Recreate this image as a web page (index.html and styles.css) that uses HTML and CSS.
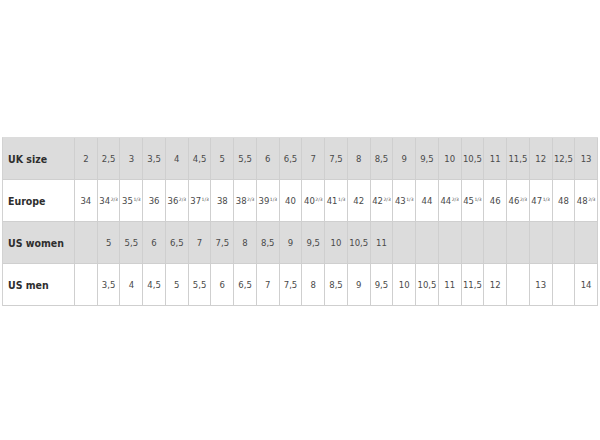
FILE: index.html
```html
<!DOCTYPE html>
<html>
<head>
<meta charset="utf-8">
<link rel="stylesheet" href="styles.css">
</head>
<body>
<div class="page">
  <div class="table">
    <div class="row gray">
      <div class="cell label">UK size</div>
      <div class="cell">2</div><div class="cell">2,5</div><div class="cell">3</div><div class="cell">3,5</div><div class="cell">4</div><div class="cell">4,5</div><div class="cell">5</div><div class="cell">5,5</div><div class="cell">6</div><div class="cell">6,5</div><div class="cell">7</div><div class="cell">7,5</div><div class="cell">8</div><div class="cell">8,5</div><div class="cell">9</div><div class="cell">9,5</div><div class="cell">10</div><div class="cell">10,5</div><div class="cell">11</div><div class="cell">11,5</div><div class="cell">12</div><div class="cell">12,5</div><div class="cell">13</div>
    </div>
    <div class="row">
      <div class="cell label">Europe</div>
      <div class="cell">34</div><div class="cell">34<sup>2/3</sup></div><div class="cell">35<sup>1/3</sup></div><div class="cell">36</div><div class="cell">36<sup>2/3</sup></div><div class="cell">37<sup>1/3</sup></div><div class="cell">38</div><div class="cell">38<sup>2/3</sup></div><div class="cell">39<sup>1/3</sup></div><div class="cell">40</div><div class="cell">40<sup>2/3</sup></div><div class="cell">41<sup>1/3</sup></div><div class="cell">42</div><div class="cell">42<sup>2/3</sup></div><div class="cell">43<sup>1/3</sup></div><div class="cell">44</div><div class="cell">44<sup>2/3</sup></div><div class="cell">45<sup>1/3</sup></div><div class="cell">46</div><div class="cell">46<sup>2/3</sup></div><div class="cell">47<sup>1/3</sup></div><div class="cell">48</div><div class="cell">48<sup>2/3</sup></div>
    </div>
    <div class="row gray">
      <div class="cell label">US women</div>
      <div class="cell"></div><div class="cell">5</div><div class="cell">5,5</div><div class="cell">6</div><div class="cell">6,5</div><div class="cell">7</div><div class="cell">7,5</div><div class="cell">8</div><div class="cell">8,5</div><div class="cell">9</div><div class="cell">9,5</div><div class="cell">10</div><div class="cell">10,5</div><div class="cell">11</div><div class="cell"></div><div class="cell"></div><div class="cell"></div><div class="cell"></div><div class="cell"></div><div class="cell"></div><div class="cell"></div><div class="cell"></div><div class="cell"></div>
    </div>
    <div class="row">
      <div class="cell label">US men</div>
      <div class="cell"></div><div class="cell">3,5</div><div class="cell">4</div><div class="cell">4,5</div><div class="cell">5</div><div class="cell">5,5</div><div class="cell">6</div><div class="cell">6,5</div><div class="cell">7</div><div class="cell">7,5</div><div class="cell">8</div><div class="cell">8,5</div><div class="cell">9</div><div class="cell">9,5</div><div class="cell">10</div><div class="cell">10,5</div><div class="cell">11</div><div class="cell">11,5</div><div class="cell">12</div><div class="cell"></div><div class="cell">13</div><div class="cell"></div><div class="cell">14</div>
    </div>
  </div>
</div>
</body>
</html>
```
FILE: styles.css
```css
html, body {
  margin: 0;
  padding: 0;
  background: #ffffff;
}
.page {
  padding: 137px 0 0 2px;
}
.table {
  width: 596px;
  box-sizing: border-box;
  border-left: 1px solid #d2d2d2;
  border-top: 1px solid #dcdcdc;
}
.row {
  display: grid;
  grid-template-columns: 72px repeat(23, 1fr);
  height: 42px;
  background: #ffffff;
}
.row.gray {
  background: #dcdcdc;
}
.cell {
  box-sizing: border-box;
  border-right: 1px solid #cfcfcf;
  border-bottom: 1px solid #cfcfcf;
  display: flex;
  align-items: center;
  justify-content: center;
  font-family: "DejaVu Sans", Verdana, sans-serif;
  font-size: 8.5px;
  color: #4a4a4a;
  white-space: nowrap;
  min-width: 0;
}
.cell.label {
  justify-content: flex-start;
  padding-left: 5px;
  font-family: "Liberation Sans Narrow", "DejaVu Sans Condensed", "Liberation Sans", sans-serif;
  font-weight: bold;
  font-size: 10.5px;
  color: #2e2e2e;
}
.cell sup {
  font-size: 4.5px;
  line-height: 0;
  position: relative;
  top: -1px;
  vertical-align: super;
  margin-left: 0.5px;
}
```
